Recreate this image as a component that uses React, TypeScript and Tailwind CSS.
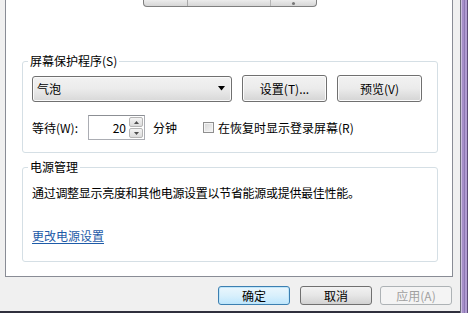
const font = { fontFamily: '"Noto Sans CJK SC", "Liberation Sans", sans-serif' };

function Btn({ label, primary, disabled, className = '' }: { label: string; primary?: boolean; disabled?: boolean; className?: string }) {
  const base = 'block w-[72px] h-[19px] rounded-[3px] border text-[12px] leading-none ' + className + ' ';
  return (
    <button
      className={
        base +
        (primary
          ? 'border-[#3c7fb1] bg-gradient-to-b from-[#eaf6fd] via-[#d9f0fc] to-[#bee6fd] text-black shadow-[inset_0_0_0_1px_#bfe6fa]'
          : disabled
          ? 'border-[#adb2b5] bg-[#f4f4f4] text-[#a0a0a0]'
          : 'border-[#707070] bg-gradient-to-b from-[#f2f2f2] via-[#e6e6e6] to-[#d2d2d2] text-black')
      }
    >
      {label}
    </button>
  );
}

function BigBtn({ label }: { label: string }) {
  return (
    <button className="block ml-[10px] w-[85px] h-[27px] rounded-[3px] border border-[#707070] bg-gradient-to-b from-[#f2f2f2] via-[#ebebeb] to-[#d4d4d4] text-[12px] leading-none text-black shadow-[inset_0_0_0_1px_#fcfcfc]">
      {label}
    </button>
  );
}

export default function App() {
  return (
    <div className="w-[468px] h-[313px] overflow-hidden bg-[#f0f0f0] flex" style={font}>
      <div className="w-[460px] flex flex-col">
        <div className="flex-1 flex flex-col">
          {/* tab page */}
          <div className="ml-[5px] w-[448px] h-[277px] bg-white border-r border-b border-l border-[#898c95] pl-[16px] pr-[14px] flex flex-col">
            <div className="ml-[121px] w-[174px] h-[7px] flex rounded-b-[4px] border-x border-b border-[#7f7f7f] bg-gradient-to-b from-[#ececec] to-[#d6d6d6] overflow-hidden">
              <div className="w-[44px] border-r border-[#a9a9a9]" />
              <div className="w-[83px] border-r border-[#b5b5b5]" />
              <div className="flex-1 flex justify-center items-start">
                <div className="mt-[2px] w-[3px] h-[3px] rounded-full bg-[#777]" />
              </div>
            </div>

            <fieldset className="mt-[46px] border border-[#d5dfe5] rounded-[3px] pl-[9px] pr-[15px] pt-[6px] pb-[12px]">
              <legend className="ml-[-4px] px-[2px] text-[12px] leading-[16px] text-black">屏幕保护程序(S)</legend>
              <div className="flex items-center">
                <div className="w-[200px] h-[26px] rounded-[3px] border border-[#707070] bg-gradient-to-b from-[#f2f2f2] via-[#ebebeb] to-[#d8d8d8] flex items-center pl-[4px] pr-[5px] shadow-[inset_0_0_0_1px_#fafafa]">
                  <span className="flex-1 text-[12px] leading-none text-black">气泡</span>
                  <svg width="8" height="5" viewBox="0 0 8 5">
                    <path d="M0 0h7L3.5 4.5z" fill="#000" />
                  </svg>
                </div>
                <BigBtn label="设置(T)..." />
                <BigBtn label="预览(V)" />
              </div>
              <div className="mt-[13px] flex items-center text-[12px] leading-none text-black">
                <span className="w-[56px]">等待(W):</span>
                <div className="w-[57px] h-[25px] flex border border-[#abadb3] border-t-[#8c8f94] bg-white">
                  <div className="flex-1 flex items-center justify-end pr-[3px]">20</div>
                  <div className="w-[15px] flex flex-col gap-[1px] py-[1px] pr-[1px]">
                    <div className="flex-1 rounded-[2px] border border-[#b5b5b5] bg-gradient-to-b from-[#f4f4f4] to-[#dcdcdc] flex items-center justify-center">
                      <svg width="5" height="3" viewBox="0 0 5 3">
                        <path d="M2.5 0L5 3H0z" fill="#4d4d4d" />
                      </svg>
                    </div>
                    <div className="flex-1 rounded-[2px] border border-[#b5b5b5] bg-gradient-to-b from-[#f4f4f4] to-[#dcdcdc] flex items-center justify-center">
                      <svg width="5" height="3" viewBox="0 0 5 3">
                        <path d="M0 0h5L2.5 3z" fill="#4d4d4d" />
                      </svg>
                    </div>
                  </div>
                </div>
                <span className="ml-[8px]">分钟</span>
                <div className="ml-[26px] w-[11px] h-[11px] border border-[#8f8f8f] bg-gradient-to-br from-[#d6d6d6] to-[#f6f6f6] shadow-[inset_0_0_0_1px_#f4f4f4]" />
                <span className="ml-[4px]">在恢复时显示登录屏幕(R)</span>
              </div>
            </fieldset>

            <fieldset className="mt-[6px] border border-[#d5dfe5] rounded-[3px] pl-[9px] pr-[15px] pt-[10px] pb-[17px]">
              <legend className="ml-[-4px] px-[2px] text-[12px] leading-[16px] text-black">电源管理</legend>
              <p className="text-[12px] leading-[16px] text-black tracking-[-0.3px]">
                通过调整显示亮度和其他电源设置以节省能源或提供最佳性能。
              </p>
              <a className="mt-[27px] block w-fit text-[12px] leading-[16px] text-[#1e5ba8] underline underline-offset-2" href="#">
                更改电源设置
              </a>
            </fieldset>
          </div>

          <div className="mt-[9px] flex items-center justify-end pr-[8px]">
            <Btn label="确定" primary />
            <Btn label="取消" className="ml-[10px]" />
            <Btn label="应用(A)" disabled className="ml-[8px]" />
          </div>
        </div>
        <div className="h-[2px] bg-[#2f2f3d]" />
      </div>
      <div className="w-[8px] flex">
        <div className="w-[1px] bg-[#6a6a78]" />
        <div className="w-[1px] bg-[#cbbfe0]" />
        <div className="w-[2px] bg-[#a690c9]" />
        <div className="w-[1px] bg-[#8e78b4]" />
        <div className="w-[2px] bg-[#b09cd2]" />
        <div className="w-[1px] bg-[#5d4d78]" />
      </div>
    </div>
  );
}
